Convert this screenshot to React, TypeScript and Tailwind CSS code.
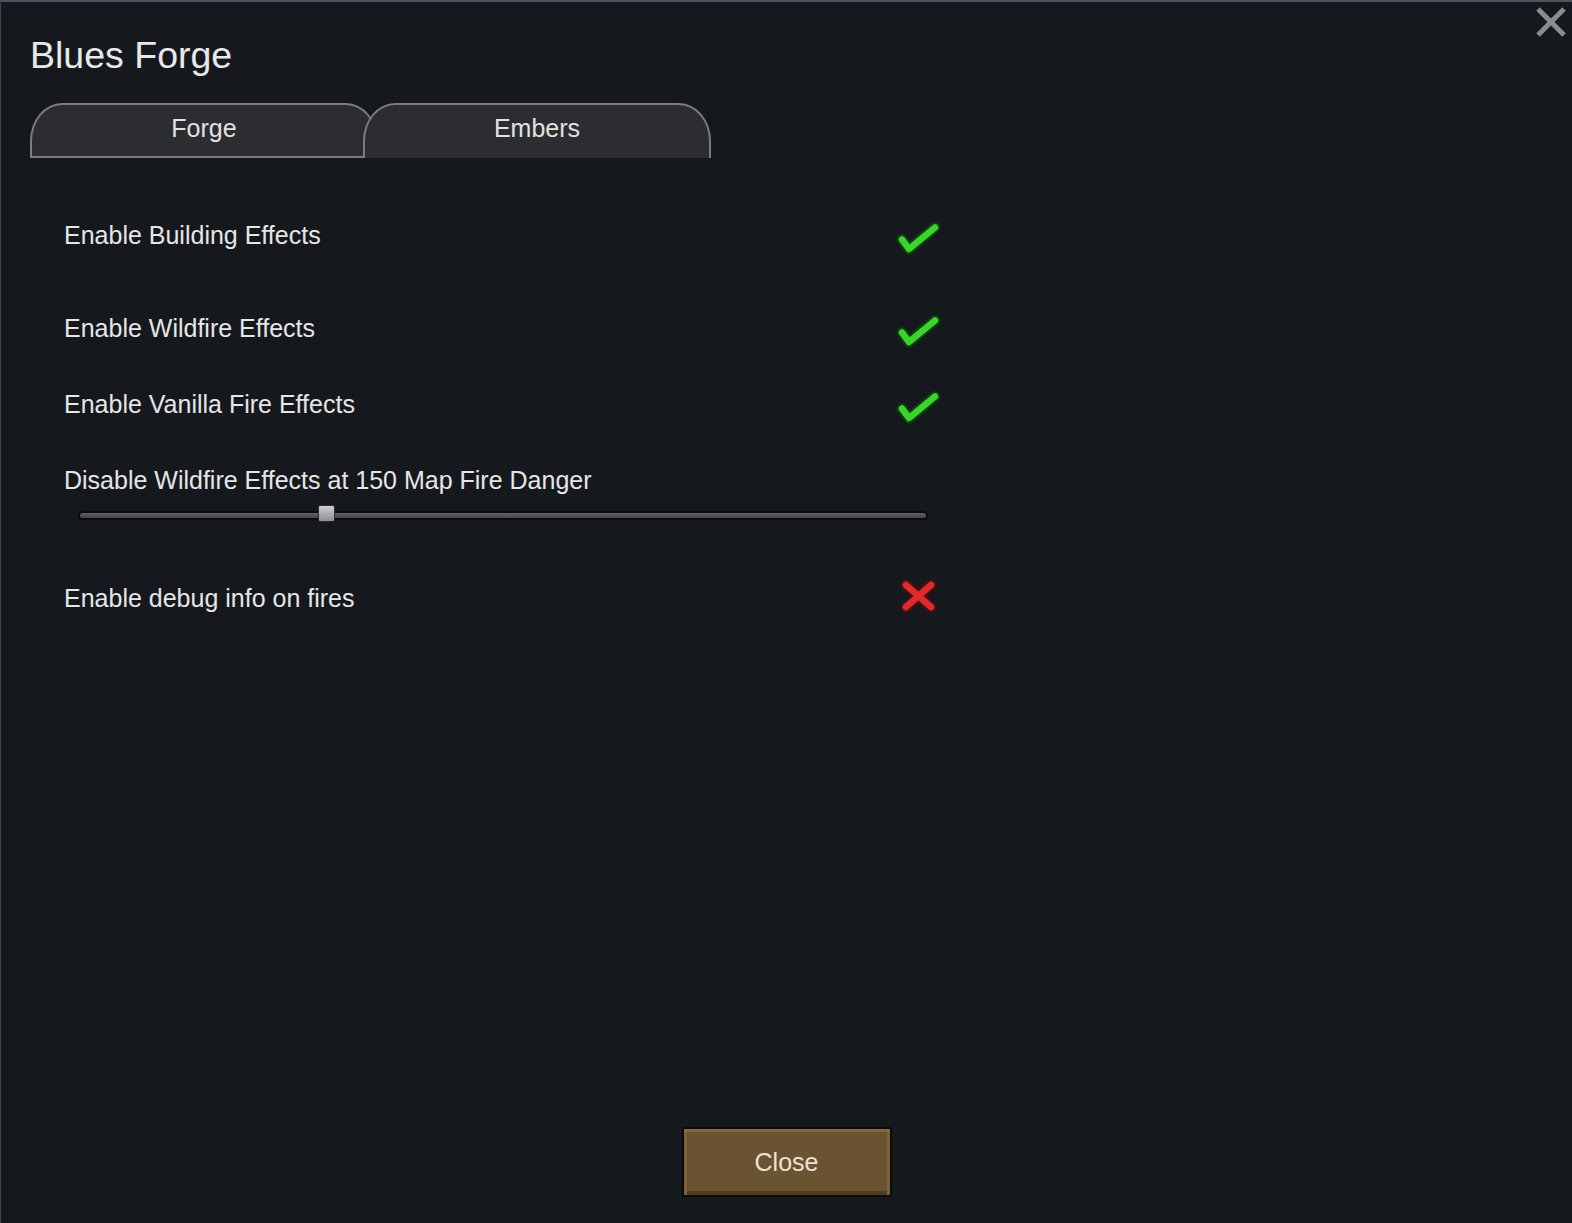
import React from "react";

function Check() {
  return (
    <svg width="48" height="40" viewBox="0 0 48 40" className="shrink-0">
      <polyline points="7,24.5 14,34 40,12.5" fill="none" stroke="#0e3f0e" strokeWidth="11" strokeLinecap="round" strokeLinejoin="round" opacity="0.95" />
      <polyline points="7,24.5 14,34 40,12.5" fill="none" stroke="#3ad52b" strokeWidth="6.5" strokeLinecap="round" strokeLinejoin="round" />
    </svg>
  );
}

function Cross() {
  return (
    <svg width="48" height="40" viewBox="0 0 48 40" className="shrink-0">
      <g fill="none" stroke="#4e1010" strokeWidth="10.5" strokeLinecap="round" opacity="0.95">
        <line x1="11" y1="7" x2="36" y2="29" />
        <line x1="36" y1="7" x2="11" y2="29" />
      </g>
      <g fill="none" stroke="#e22a2a" strokeWidth="6.5" strokeLinecap="round">
        <line x1="11" y1="7" x2="36" y2="29" />
        <line x1="36" y1="7" x2="11" y2="29" />
      </g>
    </svg>
  );
}

function Row({ label, on, className }: { label: string; on: boolean; className: string }) {
  return (
    <div className={"flex items-center justify-between w-[879px] h-[28px] " + className}>
      <span className="text-[25px] leading-[28px] whitespace-nowrap">{label}</span>
      {on ? <Check /> : <Cross />}
    </div>
  );
}

export default function App() {
  return (
    <div className="relative w-[1572px] h-[1223px] bg-[#15191e] border-t-2 border-l border-t-[#4b5361] border-l-[#3b4552] flex flex-col overflow-hidden text-[#e6e6e6] font-['Liberation_Sans',Arial,sans-serif]">
      <svg width="32" height="32" viewBox="0 0 32 32" className="absolute right-[5px] top-[4px]">
        <g stroke="#8a8d90" strokeWidth="5" strokeLinecap="butt">
          <line x1="3" y1="3" x2="29" y2="29" />
          <line x1="29" y1="3" x2="3" y2="29" />
        </g>
      </svg>

      <div className="pl-[29px] pt-[32px]">
        <h1 className="text-[37.5px] leading-[42px] text-[#e8e8e8]">Blues Forge</h1>
        <div className="flex mt-[27px]">
          <div className="w-[348px] h-[55px] border-2 border-[#7c7c7c] rounded-tl-[32px_38px] rounded-tr-[32px_38px] bg-[#2c2d30] text-center pt-[9px] text-[25px] leading-[28px] text-[#e2e2e2]">
            Forge
          </div>
          <div className="relative z-10 -ml-[15px] w-[348px] h-[55px] border-2 border-b-0 border-[#7c7c7c] rounded-tl-[32px_38px] rounded-tr-[32px_38px] bg-[#2c2d30] text-center pt-[9px] text-[25px] leading-[28px] text-[#e2e2e2]">
            Embers
          </div>
        </div>
      </div>

      <div className="pl-[63px] flex flex-col">
        <Row label="Enable Building Effects" on className="mt-[62.5px]" />
        <Row label="Enable Wildfire Effects" on className="mt-[65px]" />
        <Row label="Enable Vanilla Fire Effects" on className="mt-[48px]" />
        <div className="mt-[48px] h-[28px] text-[25px] leading-[28px] whitespace-nowrap">
          Disable Wildfire Effects at 150 Map Fire Danger
        </div>
        <div className="relative mt-[17.5px] ml-[14px] w-[850px] h-[9px] rounded-full bg-[#0a0b0c] p-[2px]">
          <div className="h-full w-full rounded-full bg-gradient-to-b from-[#5e5f61] to-[#464749]" />
          <div className="absolute left-[240px] top-[-6px] w-[17px] h-[17px] rounded-[2px] border border-[#2a2b2d] bg-gradient-to-b from-[#cfcfcf] to-[#8f8f8f]" />
        </div>
        <Row label="Enable debug info on fires" on={false} className="mt-[63.5px]" />
      </div>

      <div className="mt-auto pb-[26px] flex justify-center">
        <div className="w-[210px] h-[70px] border-2 border-[#0a0a0a] bg-[#6a5330] shadow-[inset_0_3px_0_#86693a,inset_3px_0_0_#7d6236,inset_-3px_0_0_#7d6236,inset_0_-4px_0_#4f3d20] flex items-center justify-center text-[25px] leading-[28px] text-[#ebe3d2]">
          Close
        </div>
      </div>
    </div>
  );
}
